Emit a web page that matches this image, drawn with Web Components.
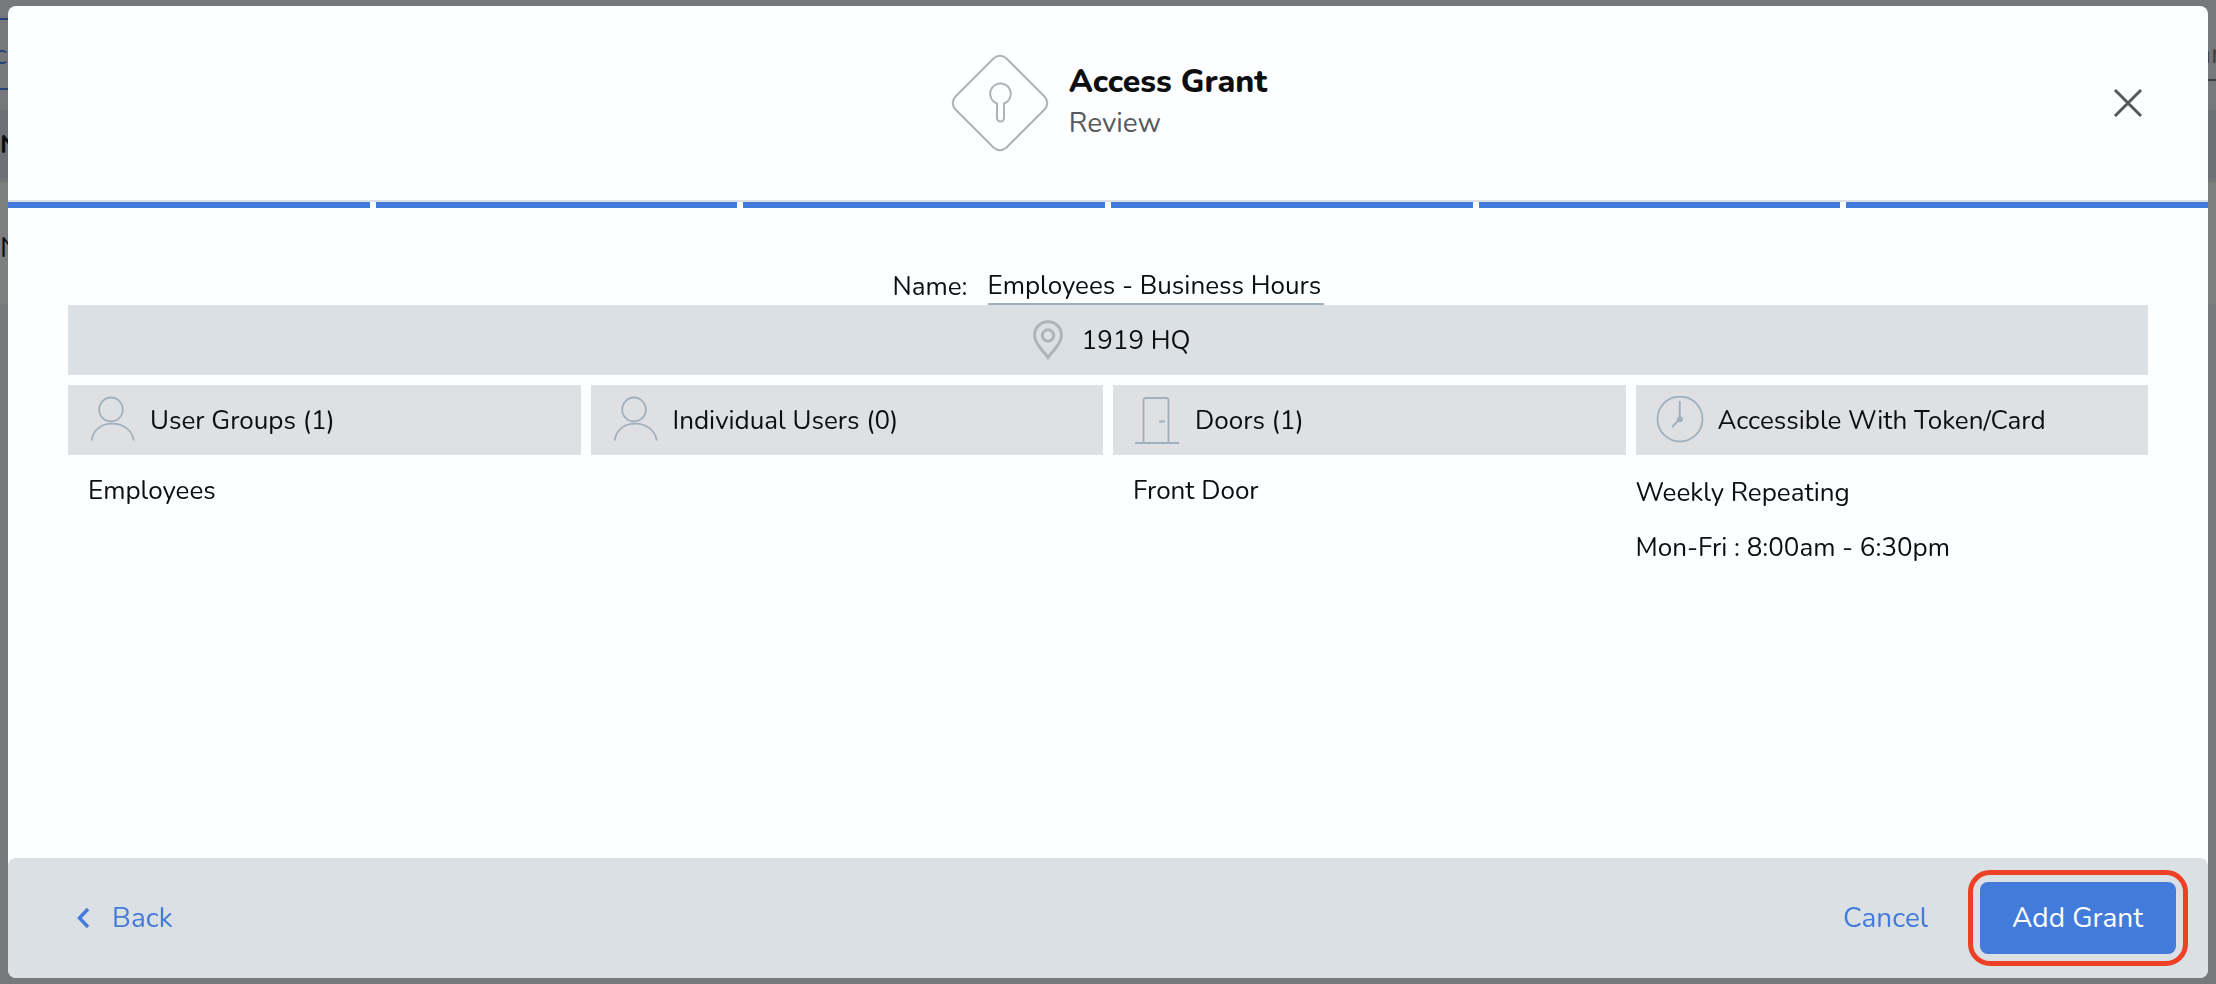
<!DOCTYPE html>
<html lang="en">
<head>
<meta charset="utf-8">
<meta name="viewport" content="width=device-width, initial-scale=1">
<title>Access Grant</title>
<style>
  html,
  body {
    margin: 0;
    height: 100%;
  }
  body {
    font-family: Nunito, "Open Sans", sans-serif;
    font-size: 26px;
    line-height: 36px;
    color: #0d0e10;
    overflow: hidden;
    --blue: #437bdb;
    --steel: #dbe0e4;
    --line: #a0b0bc;
    --grey: #dfe0e4;
  }
</style>
</head>
<body>
<dimmed-page></dimmed-page>
<wizard-modal>
  <wizard-header slot="header" steps="6" step="6">
    <span slot="title">Access Grant</span>
    <span slot="subtitle">Review</span>
  </wizard-header>

  <grant-name value="Employees - Business Hours"></grant-name>
  <site-banner>1919 HQ</site-banner>
  <review-grid>
    <review-section icon="user" heading="User Groups (1)">
      <span>Employees</span>
    </review-section>
    <review-section icon="user" heading="Individual Users (0)"></review-section>
    <review-section icon="door" heading="Doors (1)">
      <span>Front Door</span>
    </review-section>
    <review-section icon="clock" heading="Accessible With Token/Card" flush>
      <span>Weekly Repeating</span>
      <span>Mon-Fri : 8:00am - 6:30pm</span>
    </review-section>
  </review-grid>

  <wizard-footer slot="footer">
    <wizard-button slot="start" icon="back">Back</wizard-button>
    <wizard-button>Cancel</wizard-button>
    <wizard-button primary highlighted>Add Grant</wizard-button>
  </wizard-footer>
</wizard-modal>

<script>
const ICONS = {
  user: `<svg width="48" height="48" viewBox="0 0 48 48" aria-hidden="true">
    <ellipse cx="23" cy="13.5" rx="11.8" ry="12"/>
    <path d="M3.8 44.5C4.5 34.5 13 27.7 24.2 27.7S44.5 34.5 45.7 44.5"/>
  </svg>`,
  door: `<svg width="48" height="48" viewBox="0 0 48 48" aria-hidden="true">
    <path d="M10.5 46V4a2 2 0 0 1 2-2h21a2 2 0 0 1 2 2v42M26 25.5h6"/>
    <path d="M2 47h44" stroke-width="2"/>
  </svg>`,
  clock: `<svg width="48" height="48" viewBox="0 0 48 48" aria-hidden="true">
    <circle cx="24" cy="23" r="22.5"/>
    <path d="M23.7 5v18l-7.5 8" stroke-width="2"/>
    <circle cx="24" cy="23.2" r="2" fill="#a0b0bc"/>
  </svg>`,
  back: `<svg width="14" height="22" viewBox="0 0 14 22" aria-hidden="true">
    <path d="M12 2L3.5 11l8.5 9" fill="none" stroke="currentColor" stroke-width="3.5"/>
  </svg>`,
};

// Base class: opens the shadow root and fills it from render()
class BaseElement extends HTMLElement {
  constructor() {
    super();
    this.attachShadow({ mode: "open" });
  }

  connectedCallback() {
    const template = document.createElement("template");
    template.innerHTML = this.render();
    this.shadowRoot.replaceChildren(template.content.cloneNode(true));
  }
}

/**
 * The list page that stays visible around the modal, already dimmed
 */
class DimmedPage extends BaseElement {
  render() {
    return `
      <style>
        :host {
          position: fixed;
          inset: 0;
          display: block;
          overflow: hidden;
          background: #77787a;
        }
        .toolbar {
          display: flex;
          justify-content: space-between;
          align-items: flex-start;
          height: 110px;
          font-size: 28px;
        }
        .tab {
          box-sizing: border-box;
          width: 40px;
          height: 72px;
          margin-top: 18px;
          border: solid #26427a;
          border-width: 2px 0;
          line-height: 70px;
          color: #26427a;
          text-indent: -6px;
        }
        .search {
          box-sizing: border-box;
          width: 21px;
          height: 81px;
          border-bottom: 2px solid #3f4043;
          line-height: 108px;
          color: #3f4043;
        }
        .head {
          height: 68px;
          line-height: 70px;
          background: #6c7175;
          font-weight: 700;
          border-bottom: 4px solid #737476;
        }
        .row {
          height: 122px;
          line-height: 132px;
          background: #7d7f7e;
          font-size: 28px;
        }
      </style>
      <div class="toolbar" aria-hidden="true">
        <div class="tab">c</div>
        <div class="search">nn</div>
      </div>
      <div class="head" aria-hidden="true">N</div>
      <div class="row" aria-hidden="true">N</div>
    `;
  }
}

class WizardModal extends BaseElement {
  render() {
    return `
      <style>
        :host {
          position: relative;
          display: flex;
          box-sizing: border-box;
          min-height: 100%;
          padding: 6px 8px;
        }
        .dialog {
          flex: 1;
          display: flex;
          flex-direction: column;
          min-width: 0;
          background: #fdfeff;
          border-radius: 8px;
          overflow: hidden;
        }
        main {
          flex: 1;
          padding: 59px 60px 20px;
        }
      </style>
      <div class="dialog" role="dialog" aria-modal="true" aria-label="Access Grant">
        <slot name="header"></slot>
        <main><slot></slot></main>
        <slot name="footer"></slot>
      </div>
    `;
  }
}

class WizardHeader extends BaseElement {
  render() {
    const steps = Number(this.getAttribute("steps"));
    const step = Number(this.getAttribute("step"));
    let bars = "";
    for (let i = 1; i <= steps; i++) {
      bars += `<i class="${i <= step ? "done" : ""}"></i>`;
    }

    return `
      <style>
        :host {
          display: block;
        }
        .top {
          display: grid;
          grid-template-columns: 1fr auto 1fr;
          align-items: center;
          height: 194px;
          padding: 0 60px;
          border-bottom: 2px solid var(--steel);
        }
        .brand {
          grid-column: 2;
          display: flex;
          align-items: center;
          gap: 20px;
          padding-left: 2px;
        }
        .brand svg {
          display: block;
          fill: none;
          stroke: #b0b2b7;
          stroke-width: 2;
        }
        .titles {
          padding-bottom: 4px;
        }
        h1 {
          margin: 0;
          font-size: 32px;
          line-height: 44px;
          font-weight: 800;
        }
        p {
          margin: 0;
          font-size: 28px;
          line-height: 38px;
          color: #58595c;
        }
        .close {
          justify-self: end;
          display: flex;
          padding: 4px;
          border: 0;
          background: none;
          color: #55565a;
          cursor: pointer;
        }
        .steps {
          display: flex;
          gap: 6px;
        }
        .steps i {
          flex: 1;
          height: 6px;
          background: var(--steel);
        }
        .steps .done {
          background: var(--blue);
        }
      </style>
      <header>
        <div class="top">
          <div class="brand">
            <svg width="98" height="98" viewBox="0 0 98 98" aria-hidden="true">
              <path d="M42.5 4.5Q49 -1 55.5 4.5L93.5 42.5Q99 49 93.5 55.5L55.5 93.5Q49 99 42.5 93.5L4.5 55.5Q-1 49 4.5 42.5Z"/>
              <path d="M46 49.5A10.3 10.3 0 1 1 53 49.5V64a3.5 3.5 0 0 1-7 0Z"/>
            </svg>
            <div class="titles">
              <h1><slot name="title"></slot></h1>
              <p><slot name="subtitle"></slot></p>
            </div>
          </div>
          <button class="close" type="button" aria-label="Close">
            <svg width="32" height="32" viewBox="0 0 32 32" aria-hidden="true">
              <path d="M3 3l26 26M29 3L3 29" stroke="currentColor" stroke-width="3"/>
            </svg>
          </button>
        </div>
        <div class="steps" role="progressbar" aria-label="Step" aria-valuemin="0" aria-valuemax="${steps}" aria-valuenow="${step}">${bars}</div>
      </header>
    `;
  }
}

class GrantName extends BaseElement {
  render() {
    return `
      <style>
        :host {
          display: flex;
          justify-content: center;
          align-items: flex-end;
          gap: 20px;
        }
        input {
          field-sizing: content;
          min-width: 336px;
          box-sizing: border-box;
          height: 38px;
          padding: 0;
          border: 0;
          border-bottom: 2px solid var(--line);
          background: none;
          font: inherit;
          color: inherit;
          outline: none;
        }
      </style>
      <label for="name">Name:</label>
      <input id="name" type="text" value="${this.getAttribute("value")}">
    `;
  }
}

class SiteBanner extends BaseElement {
  render() {
    return `
      <style>
        :host {
          display: flex;
          justify-content: center;
          align-items: center;
          gap: 12px;
          min-height: 70px;
          background: var(--steel);
        }
        svg {
          fill: none;
          stroke: #b0b4b8;
          stroke-width: 3;
        }
        span {
          padding-top: 2px;
        }
      </style>
      <svg width="44" height="40" viewBox="0 0 44 40" aria-hidden="true">
        <path d="M22 37.5C18 31.5 8.5 24 8.5 15.5C8.5 7.5 14.5 1.8 22 1.8S35.5 7.5 35.5 15.5C35.5 24 26 31.5 22 37.5Z"/>
        <circle cx="22" cy="15.5" r="5.7"/>
      </svg>
      <span><slot></slot></span>
    `;
  }
}

class ReviewGrid extends BaseElement {
  render() {
    return `
      <style>
        :host {
          display: grid;
          grid-template-columns: repeat(4, minmax(0, 1fr));
          gap: 10px;
          margin-top: 10px;
        }
      </style>
      <slot></slot>
    `;
  }
}

class ReviewSection extends BaseElement {
  render() {
    return `
      <style>
        :host {
          display: block;
        }
        h2 {
          display: flex;
          align-items: center;
          gap: 14px;
          min-height: 70px;
          margin: 0;
          padding: 0 20px;
          background: var(--grey);
          font: inherit;
        }
        h2 span {
          padding-top: 2px;
        }
        svg {
          flex: none;
          fill: none;
          stroke: var(--line);
          stroke-width: 1.8;
        }
        .items {
          display: flex;
          flex-direction: column;
          gap: 19px;
          padding: 18px 20px;
        }
        :host([flush]) .items {
          padding: 20px 0;
        }
      </style>
      <section>
        <h2>${ICONS[this.getAttribute("icon")]}<span>${this.getAttribute("heading")}</span></h2>
        <div class="items"><slot></slot></div>
      </section>
    `;
  }
}

class WizardFooter extends BaseElement {
  render() {
    return `
      <style>
        :host {
          display: block;
        }
        footer {
          display: flex;
          justify-content: space-between;
          align-items: center;
          min-height: 120px;
          box-sizing: border-box;
          padding: 0 32px 0 68px;
          background: var(--steel);
          border-radius: 8px;
        }
        .actions {
          display: flex;
          align-items: center;
          gap: 52px;
        }
      </style>
      <footer>
        <slot name="start"></slot>
        <div class="actions"><slot></slot></div>
      </footer>
    `;
  }
}

class WizardButton extends BaseElement {
  render() {
    const icon = ICONS[this.getAttribute("icon")] || "";
    return `
      <style>
        :host {
          display: block;
          position: relative;
        }
        button {
          display: flex;
          align-items: center;
          gap: 22px;
          height: 72px;
          padding: 0;
          border: 0;
          border-radius: 8px;
          background: none;
          font: inherit;
          font-size: 28px;
          color: var(--blue);
          cursor: pointer;
        }
        :host([primary]) button {
          padding: 0 33px 0 32px;
          background: var(--blue);
          color: #fff;
        }
        /* attention ring round the button */
        :host([highlighted])::after {
          content: "";
          position: absolute;
          inset: -12px;
          border: 5px solid #ee4024;
          border-radius: 22px;
          pointer-events: none;
        }
      </style>
      <button type="button">${icon}<slot></slot></button>
    `;
  }
}

customElements.define("dimmed-page", DimmedPage);
customElements.define("wizard-modal", WizardModal);
customElements.define("wizard-header", WizardHeader);
customElements.define("grant-name", GrantName);
customElements.define("site-banner", SiteBanner);
customElements.define("review-grid", ReviewGrid);
customElements.define("review-section", ReviewSection);
customElements.define("wizard-footer", WizardFooter);
customElements.define("wizard-button", WizardButton);
</script>
</body>
</html>
